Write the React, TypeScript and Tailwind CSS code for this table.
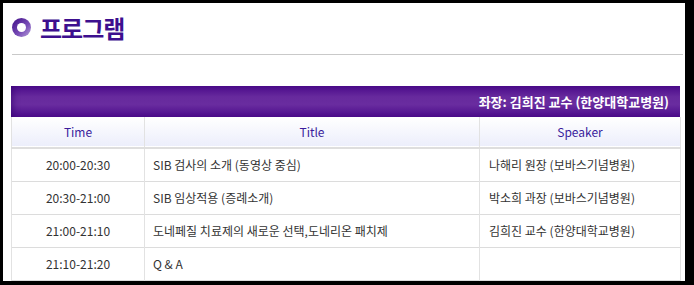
export default function App() {
  const rows = [
    { time: '20:00-20:30', title: 'SIB 검사의 소개 (동영상 중심)', speaker: '나해리 원장 (보바스기념병원)' },
    { time: '20:30-21:00', title: 'SIB 임상적용 (증례소개)', speaker: '박소희 과장 (보바스기념병원)' },
    { time: '21:00-21:10', title: '도네페질 치료제의 새로운 선택,도네리온 패치제', speaker: '김희진 교수 (한양대학교병원)' },
    { time: '21:10-21:20', title: 'Q & A', speaker: '' },
  ];

  return (
    <div className="w-[694px] h-[285px] bg-black pt-[3px] pl-[3px] pr-[9px] pb-[4px] font-['Noto_Sans_CJK_KR','Noto_Sans',sans-serif]">
      <div className="h-full bg-white overflow-hidden">
        {/* Title */}
        <div className="flex items-center h-[48px] pl-[9px] pt-[1px]">
          <div className="w-[19px] h-[19px] rounded-full bg-[linear-gradient(135deg,#3f0d86,#7a4fb8_60%,#b9a3dc)] flex items-center justify-center">
            <div className="w-[9px] h-[9px] rounded-full bg-white" />
          </div>
          <h1 className="ml-[9px] text-[24px] leading-none font-bold text-[#3d0f8e] tracking-[-1px]">프로그램</h1>
        </div>
        <div className="ml-[9px] mr-[2px] mt-[3px] h-px bg-[#c9c9c9]" />

        {/* Table */}
        <div className="ml-[8px] mt-[31px] w-[669px]">
          <div className="h-[31px] flex items-center justify-end pr-[11px] bg-[linear-gradient(to_bottom,#4a0a8a,#672a9d_35%,#692c9f_60%,#4b0b8b)] shadow-[inset_6px_0_6px_-4px_rgba(50,0,110,0.6)]">
            <span className="text-white text-[13px] font-bold">좌장: 김희진 교수 (한양대학교병원)</span>
          </div>
          <table className="w-[669px] border-collapse table-fixed text-[12px] text-[#333]">
            <colgroup>
              <col className="w-[133px]" />
              <col className="w-[335px]" />
              <col className="w-[201px]" />
            </colgroup>
            <thead>
              <tr className="h-[31px] bg-[linear-gradient(to_bottom,#ffffff,#eceefb)] text-[#3a1c9c] border-b-2 border-[#dedede]">
                <th className="font-normal border-l border-[#e2e2e2]">Time</th>
                <th className="font-normal border-l border-[#e2e2e2]">Title</th>
                <th className="font-normal border-l border-r border-[#e2e2e2]">Speaker</th>
              </tr>
            </thead>
            <tbody>
              {rows.map((r) => (
                <tr key={r.time} className="h-[33px] border-b border-[#dcdcdc]">
                  <td className="text-center border-l border-[#e2e2e2]">{r.time}</td>
                  <td className="pl-[8px] border-l border-[#e2e2e2]">{r.title}</td>
                  <td className="pl-[9px] border-l border-r border-[#e2e2e2]">{r.speaker}</td>
                </tr>
              ))}
            </tbody>
          </table>
        </div>
      </div>
    </div>
  );
}
